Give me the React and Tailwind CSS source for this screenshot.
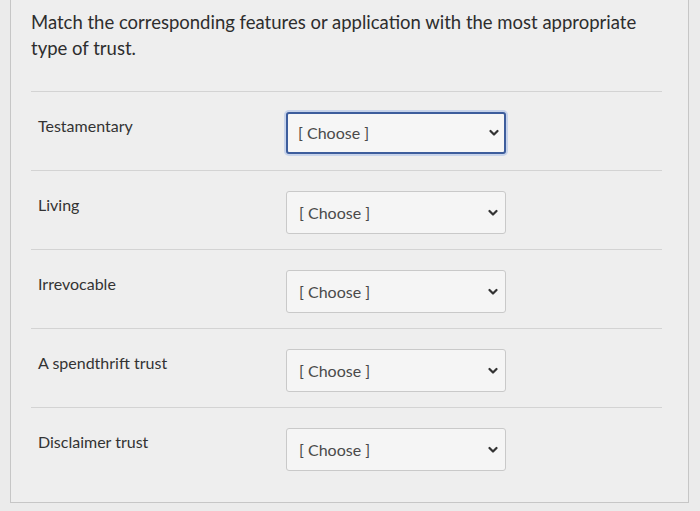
import React from 'react';

const rows = ['Testamentary', 'Living', 'Irrevocable', 'A spendthrift trust', 'Disclaimer trust'];

const Chevron = () => (
  <svg width="10" height="8" viewBox="0 0 10 8" fill="none">
    <path d="M1.5 2 L5 5.5 L8.5 2" stroke="#333" strokeWidth="2.2" strokeLinecap="round" strokeLinejoin="round" />
  </svg>
);

const ChooseBox = ({ focused }) => (
  <div
    className={
      focused
        ? 'w-[220px] h-[42px] rounded-[3px] border-2 border-[#3d5d9c] ring-2 ring-[#c7d3ea] bg-[#f6f6f6] flex items-center justify-between pl-[10px] pr-[5px]'
        : 'w-[220px] h-[43px] rounded-[3px] border border-[#c9c9c9] bg-[#f5f5f5] flex items-center justify-between pl-[12px] pr-[7px]'
    }
  >
    <span className="text-[16px] text-[#4a4a4a]">[ Choose ]</span>
    <Chevron />
  </div>
);

export default function App() {
  return (
    <div className="w-[700px] h-[511px] bg-[#ebebeb] overflow-hidden" style={{ fontFamily: 'Lato, "Open Sans", sans-serif' }}>
      <div className="ml-[10px] w-[679px] h-[503px] border-l border-r border-b border-[#c6c6c6] bg-[#eeeeee] pl-[20px] pr-[26px] pt-[9px]">
        <p className="text-[18.5px] leading-[26px] text-[#2d2d2d]">
          Match the corresponding features or application with the most appropriate
          <br />
          type of trust.
        </p>
        <div className="mt-[30px]">
          {rows.map((label, i) => (
            <div key={label} className="border-t border-[#d3d3d3]">
              <div className="h-[78px] flex items-start">
                <div className="w-[255px] pl-[7px] pt-[23px] text-[16px] leading-[22px] text-[#333333]">{label}</div>
                <div className="pt-[20px]">
                  <ChooseBox focused={i === 0} />
                </div>
              </div>
            </div>
          ))}
        </div>
      </div>
    </div>
  );
}
